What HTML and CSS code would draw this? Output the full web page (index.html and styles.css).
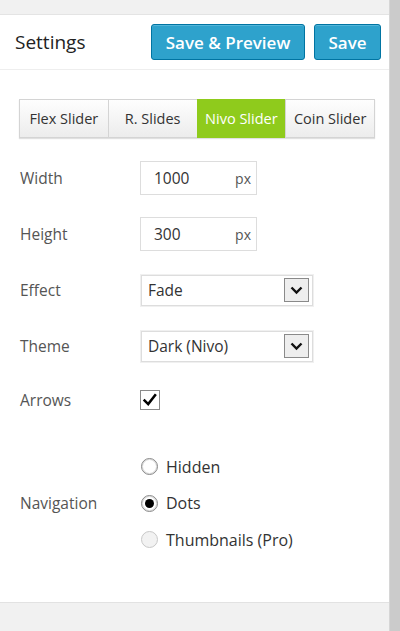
FILE: index.html
```html
<!DOCTYPE html>
<html lang="en">
<head>
  <meta charset="UTF-8">
  <meta name="viewport" content="width=device-width, initial-scale=1">
  <title>Settings</title>
  <link rel="stylesheet" href="styles.css">
</head>
<body>
  <div class="page">
    <div class="main">
      <div class="top-gap"></div>
      <div class="panel">
        <div class="header">
          <h2 class="title">Settings</h2>
          <div class="actions">
            <button class="btn btn-preview">Save &amp; Preview</button>
            <button class="btn btn-save">Save</button>
          </div>
        </div>

        <div class="body">
          <div class="tabs">
            <div class="tab">Flex Slider</div>
            <div class="tab">R. Slides</div>
            <div class="tab active">Nivo Slider</div>
            <div class="tab">Coin Slider</div>
          </div>

          <div class="row">
            <div class="label">Width</div>
            <div class="field">
              <div class="num"><span class="val">1000</span><span class="unit">px</span></div>
            </div>
          </div>

          <div class="row">
            <div class="label">Height</div>
            <div class="field">
              <div class="num"><span class="val">300</span><span class="unit">px</span></div>
            </div>
          </div>

          <div class="row">
            <div class="label">Effect</div>
            <div class="field">
              <div class="select">
                <span>Fade</span>
                <span class="arrow">
                  <svg width="13" height="9" viewBox="0 0 13 9"><polyline points="1.5,1.5 6.5,6.5 11.5,1.5" fill="none" stroke="#111" stroke-width="2.4"/></svg>
                </span>
              </div>
            </div>
          </div>

          <div class="row">
            <div class="label">Theme</div>
            <div class="field">
              <div class="select">
                <span>Dark (Nivo)</span>
                <span class="arrow">
                  <svg width="13" height="9" viewBox="0 0 13 9"><polyline points="1.5,1.5 6.5,6.5 11.5,1.5" fill="none" stroke="#111" stroke-width="2.4"/></svg>
                </span>
              </div>
            </div>
          </div>

          <div class="row row-check">
            <div class="label">Arrows</div>
            <div class="field">
              <span class="checkbox">
                <svg width="20" height="18" viewBox="0 0 20 18"><polyline points="3,8.5 8,13.5 16.5,2.5" fill="none" stroke="#000" stroke-width="2.8"/></svg>
              </span>
            </div>
          </div>

          <div class="row row-nav">
            <div class="label">Navigation</div>
            <div class="radios">
              <div class="radio-line"><span class="radio"></span>Hidden</div>
              <div class="radio-line"><span class="radio on"></span>Dots</div>
              <div class="radio-line"><span class="radio off"></span>Thumbnails (Pro)</div>
            </div>
          </div>
        </div>
      </div>
    </div>
    <div class="scrollbar"></div>
  </div>
</body>
</html>
```

FILE: styles.css
```css
* {
  box-sizing: border-box;
}

body {
  margin: 0;
  font-family: "Open Sans", "Liberation Sans", sans-serif;
  background: #f1f1f1;
  color: #333;
}

.page {
  display: flex;
  height: 631px;
}

.main {
  width: 389px;
  display: flex;
  flex-direction: column;
}

.top-gap {
  height: 15px;
  border-bottom: 1px solid #e4e4e4;
}

.panel {
  background: #fff;
  height: 588px;
  border-bottom: 1px solid #e2e2e2;
}

.scrollbar {
  width: 11px;
  background: #cbcbcb;
  border-left: 1px solid #d6d6d6;
}

/* header */
.header {
  display: flex;
  align-items: center;
  justify-content: space-between;
  height: 55px;
  padding: 0 8px 0 15px;
  border-bottom: 1px solid #eee;
}

.title {
  margin: 0;
  font-size: 19px;
  font-weight: 400;
  color: #222;
}

.actions {
  display: flex;
  gap: 9px;
}

.btn {
  height: 36px;
  border: 1px solid #0074a2;
  border-radius: 3px;
  background: #2ea2cc;
  color: #fff;
  font-family: inherit;
  font-size: 17px;
  font-weight: 600;
  padding: 0;
  box-shadow: inset 0 1px 0 rgba(120,200,230,0.5);
}

.btn-preview {
  width: 154px;
}

.btn-save {
  width: 67px;
}

/* tabs */
.body {
  padding: 29px 0 0 19px;
}

.tabs {
  display: flex;
  width: 356px;
  height: 39px;
  margin-bottom: 12px;
  box-shadow: 0 1px 1px rgba(0,0,0,0.12);
}

.tab {
  flex: 1;
  display: flex;
  align-items: center;
  justify-content: center;
  font-size: 14.5px;
  color: #333;
  background: linear-gradient(#fefefe, #ececec);
  border: 1px solid #d4d4d4;
  border-right: none;
}

.tab:last-child {
  border-right: 1px solid #d4d4d4;
}

.tab.active {
  background: #8fcb1c;
  border-color: #8fcb1c;
  color: #fff;
}

/* form rows */
.row {
  display: flex;
  align-items: center;
  height: 56px;
}

.label {
  width: 121px;
  padding-left: 1px;
  font-size: 15.5px;
  color: #555;
}

.num {
  display: flex;
  align-items: center;
  justify-content: space-between;
  width: 117px;
  height: 34px;
  padding: 0 5px 0 13px;
  border: 1px solid #ddd;
  font-size: 15.5px;
  color: #333;
}

.unit {
  font-size: 14px;
  color: #555;
}

.select {
  display: flex;
  align-items: center;
  justify-content: space-between;
  width: 172px;
  height: 31px;
  margin-left: 1px;
  padding: 0 3px 0 6px;
  border: 1px solid #ddd;
  outline: 1px solid #f0f0f0;
  font-size: 15.5px;
  color: #333;
}

.arrow {
  display: flex;
  align-items: center;
  justify-content: center;
  width: 25px;
  height: 24px;
  background: #eee;
  border: 1px solid #8a8a8a;
}

.row-check {
  height: 52px;
}

.checkbox {
  display: flex;
  align-items: center;
  justify-content: center;
  width: 20px;
  height: 20px;
  border: 1px solid #8a8a8a;
  background: #fff;
}

.row-nav {
  height: auto;
  margin-top: 29px;
}

.radios {
  display: flex;
  flex-direction: column;
  gap: 13.5px;
}

.radio-line {
  display: flex;
  align-items: center;
  gap: 8px;
  height: 23px;
  font-size: 16px;
  color: #333;
}

.radio {
  width: 17px;
  height: 17px;
  margin-left: 1px;
  border-radius: 50%;
  border: 1px solid #888;
  background: #fff;
  box-shadow: inset 0 0 0 1px #ddd;
  display: flex;
  align-items: center;
  justify-content: center;
}

.radio.on::after {
  content: "";
  width: 9px;
  height: 9px;
  border-radius: 50%;
  background: #000;
}

.radio.off {
  border-color: #c8c8c8;
  background: #f2f2f2;
  box-shadow: none;
}
```
